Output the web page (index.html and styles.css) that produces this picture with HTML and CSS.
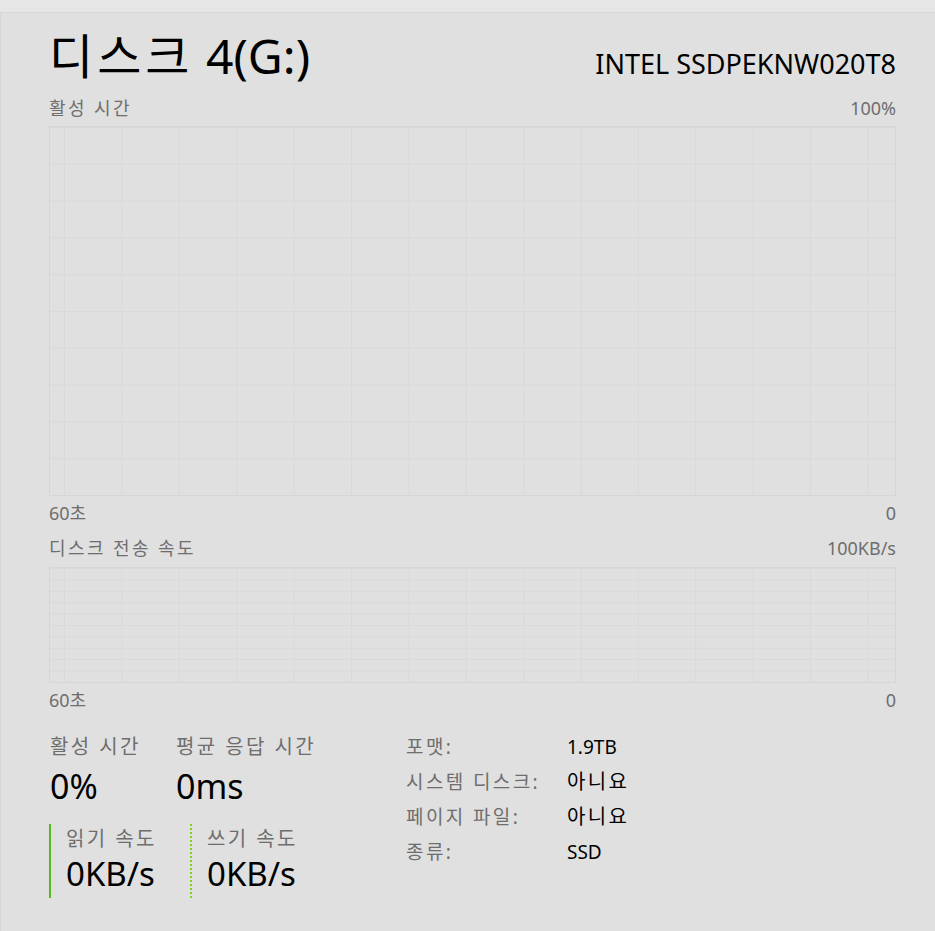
FILE: index.html
```html
<!DOCTYPE html>
<html lang="ko">
<head>
    <meta charset="UTF-8">
    <meta name="viewport" content="width=device-width, initial-scale=1.0">
    <title>디스크 4(G:)</title>
    <link rel="stylesheet" href="styles.css">
</head>
<body>
    <main class="panel">
        <header class="head">
            <h1 class="title"><span class="ko">디스크</span> 4(G:)</h1>
            <span class="model">INTEL SSDPEKNW020T8</span>
        </header>

        <!-- active time chart -->
        <div class="axis">
            <span class="ko">활성 시간</span>
            <span>100%</span>
        </div>
        <div class="graph graph-big"></div>
        <div class="axis axis-low">
            <span>60초</span>
            <span>0</span>
        </div>

        <!-- transfer rate chart -->
        <div class="axis axis-gap">
            <span class="ko">디스크 전송 속도</span>
            <span>100KB/s</span>
        </div>
        <div class="graph graph-small"></div>
        <div class="axis axis-low">
            <span>60초</span>
            <span>0</span>
        </div>

        <section class="stats">
            <div class="stats-left">
                <div class="pair">
                    <div class="stat stat-active">
                        <span class="label ko">활성 시간</span>
                        <span class="value">0%</span>
                    </div>
                    <div class="stat">
                        <span class="label ko">평균 응답 시간</span>
                        <span class="value">0ms</span>
                    </div>
                </div>
                <div class="pair">
                    <div class="stat rate rate-read">
                        <span class="label ko">읽기 속도</span>
                        <span class="value">0KB/s</span>
                    </div>
                    <div class="stat rate rate-write">
                        <span class="label ko">쓰기 속도</span>
                        <span class="value">0KB/s</span>
                    </div>
                </div>
            </div>
            <dl class="info">
                <dt class="ko">포맷:</dt>
                <dd class="latin">1.9TB</dd>
                <dt class="ko">시스템 디스크:</dt>
                <dd class="ko">아니요</dd>
                <dt class="ko">페이지 파일:</dt>
                <dd class="ko">아니요</dd>
                <dt class="ko">종류:</dt>
                <dd class="latin">SSD</dd>
            </dl>
        </section>
    </main>
</body>
</html>
```

FILE: styles.css
```css
* {
  padding: 0;
  margin: 0;
  box-sizing: border-box;
}
html {
  font-family: 'Noto Sans', 'Noto Sans CJK KR', sans-serif;
  font-size: 16px;
  color: #000;
  background-color: #e6e6e6;
}
body {
  min-height: 100vh;
  padding-top: 12px;
}
.panel {
  background-color: #e0e0e0;
  border-top: 1px solid #d8d8d8;
  border-left: 1px solid #d8d8d8;
  min-height: calc(100vh - 12px);
  padding: 0 39px 0 48px;
}
/* hangul runs a little loose, like the system UI font */
.ko {
  letter-spacing: 2.4px;
}
.head {
  display: flex;
  justify-content: space-between;
  align-items: baseline;
  height: 84px;
  padding-top: 14px;
}
.title {
  font-size: 48px;
  font-weight: 400;
  line-height: 58px;
}
.title .ko {
  letter-spacing: 4px;
}
.model {
  font-size: 27px;
  line-height: 30px;
}
.axis {
  display: flex;
  justify-content: space-between;
  font-size: 18px;
  line-height: 22px;
  color: #6e6e6e;
}
.axis-low {
  margin-top: 6px;
}
.axis-gap {
  margin-top: 13px;
}
.graph {
  margin-top: 7px;
  border: 1px solid #d6d6d6;
  background-image:
    linear-gradient(to right, #d9d9d9 1px, transparent 1px),
    linear-gradient(to bottom, #d9d9d9 1px, transparent 1px);
  background-size: 57.4px 100%, 100% 10%;
  background-position: 14px 0, 0 0;
}
.graph-big {
  height: 370px;
}
.graph-small {
  height: 116px;
  margin-top: 8px;
}
.stats {
  display: flex;
  margin-top: 22px;
}
.stats-left {
  width: 357px;
}
.pair {
  display: flex;
}
.stat {
  display: flex;
  flex-direction: column;
}
.stat-active {
  width: 127px;
  padding-left: 1px;
}
.label {
  font-size: 20px;
  line-height: 28px;
  color: #6e6e6e;
}
.value {
  font-size: 34px;
  line-height: 50px;
}
.rate {
  margin-top: 13px;
  padding: 1px 0 3px 15px;
  height: 74px;
}
.rate .value {
  font-size: 33px;
  line-height: 42px;
}
.rate-read {
  width: 141px;
  border-left: 2px solid #56b81c;
}
.rate-write {
  border-left: 2px dotted #7ed321;
}
.info {
  display: grid;
  grid-template-columns: 161px auto;
  grid-auto-rows: 35px;
  font-size: 19px;
  line-height: 28px;
}
.info dt {
  color: #6e6e6e;
}
.info dd {
  color: #000;
  font-size: 20px;
}
.info dd.latin {
  font-size: 19px;
}
```
